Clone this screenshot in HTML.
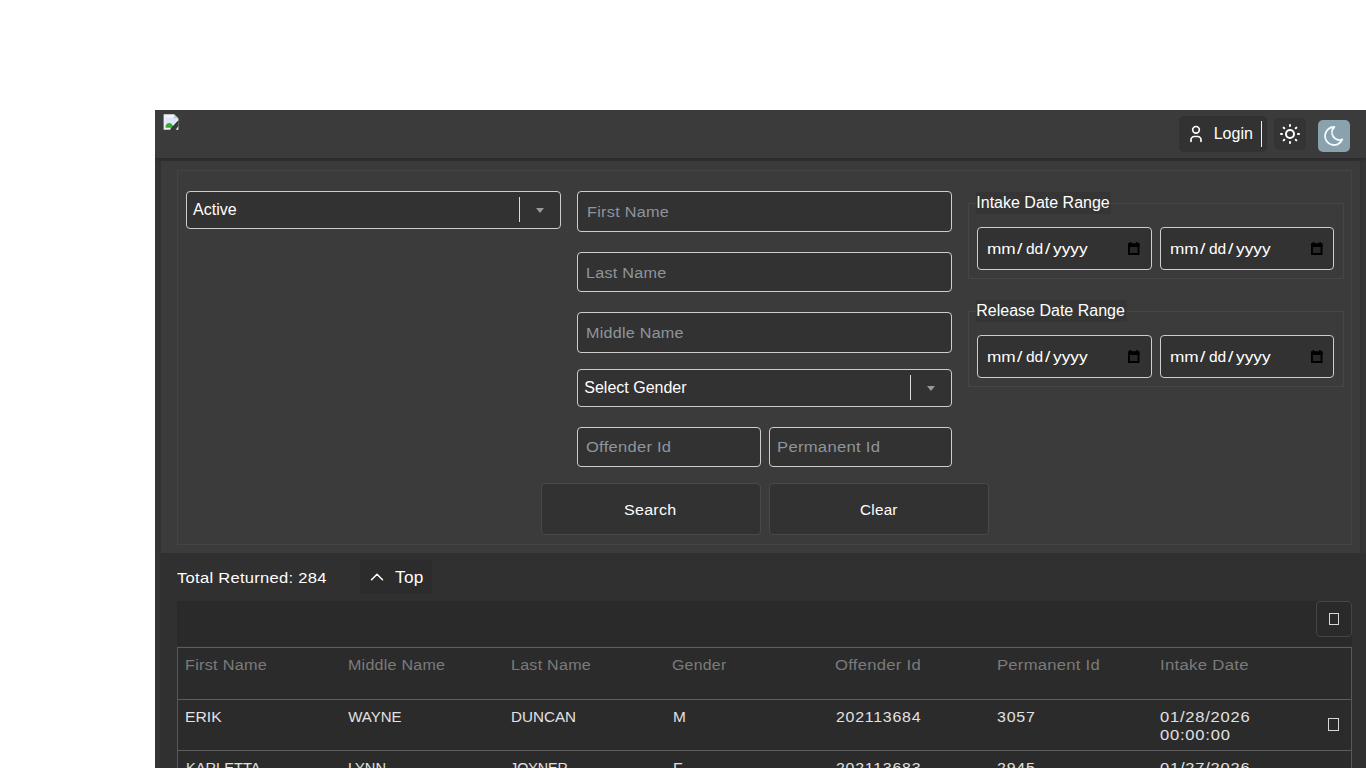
<!DOCTYPE html>
<html>
<head>
<meta charset="utf-8">
<title>Offender Search</title>
<style>
*{box-sizing:border-box;margin:0;padding:0}
html,body{width:1366px;height:768px;overflow:hidden;background:#fff;font-family:"Liberation Sans",sans-serif;}
.abs{position:absolute}
#panel{position:absolute;left:155px;top:110px;width:1211px;height:658px;background:#353535;overflow:hidden}
#pg{position:absolute;left:-155px;top:-110px;width:1366px;height:768px}
#header{position:absolute;left:155px;top:110px;width:1211px;height:48px;background:#3b3b3b;box-shadow:0 1px 3px rgba(0,0,0,.28)}
#card{position:absolute;left:161px;top:161px;width:1199px;height:392px;background:#3b3b3b;box-shadow:0 0 3px rgba(0,0,0,.18)}
#fs{position:absolute;left:177px;top:170px;width:1175px;height:375px;border:1px solid #444}
#results{position:absolute;left:160px;top:553px;width:1206px;height:215px;background:#303030}
.tx{position:absolute;white-space:nowrap;line-height:20px;transform-origin:0 50%;font-family:"Liberation Sans",sans-serif}
.inp{position:absolute;background:#323232;border:1px solid #cdcdcd;border-radius:4px}
.sel{position:absolute;background:#323232;border:1px solid #cdcdcd;border-radius:4px}
.sel .bar{position:absolute;right:40px;top:5px;width:1px;height:25px;background:#dcdcdc}
.sel .arr{position:absolute;right:16px;top:16px;width:0;height:0;border-left:4px solid transparent;border-right:4px solid transparent;border-top:5px solid #989898}
.fset{position:absolute;border:1px solid #464646;width:376px;height:76px}
.leg{position:absolute;background:#353535;height:22px}
.date{position:absolute;width:175px;height:43px;background:#323232;border:1px solid #cdcdcd;border-radius:4px}
.date svg{position:absolute;left:150px;top:14px}
.btn{position:absolute;height:52px;width:220px;background:#323232;border:1px solid #494949;border-radius:4px}
.hl{position:absolute;height:1px;background:#5e5e5e}
.vl{position:absolute;width:1px;background:#585858}
.tofu{position:absolute;border:1px solid #d6d6d6}
</style>
</head>
<body>
<div id="panel">
  <div id="pg">
    <div id="card"></div>
    <div id="results"></div>
    <div id="header"></div>
    <div id="fs"></div>

    <!-- broken image icon -->
    <svg class="abs" style="left:163px;top:114px" width="16" height="16" viewBox="0 0 16 16">
      <path d="M.8 .3h10.2l4.2 4.2v11.2H.8z" fill="#f3f4fb"/>
      <path d="M.8 .3h10.2l4.2 4.2v11.2H.8z" fill="none" stroke="#b9bcc6" stroke-width=".5"/>
      <path d="M2.6 3.4h10.8v10.4H2.6z" fill="#dfe6fb"/>
      <path d="M11 .3l4.2 4.2H11z" fill="#c4c8d4"/>
      <path d="M2.6 13.8v-2.4c1.3-2 3.4-2.8 5.2-2 1.5.7 2.4 2.2 2.8 4.4z" fill="#3fa535"/>
      <path d="M15.4 7.4L7.6 15.9h7.8z" fill="#3b3b3b"/>
      <path d="M15.3 7.3L7.6 15.7" stroke="#173a25" stroke-width="1.3" fill="none"/>
      <path d="M15.2 12.2l-2.4 3.5h2.4z" fill="#eceef4"/>
    </svg>
    <!-- login group -->
    <div class="abs" style="left:1179px;top:116px;width:88px;height:36px;background:#323232;border-radius:5px"></div>
    <svg class="abs" style="left:1186px;top:124px" width="20" height="20" viewBox="0 0 24 24" fill="none" stroke="#fff" stroke-width="2" stroke-linecap="round" stroke-linejoin="round">
      <path d="M8 7a4 4 0 1 0 8 0a4 4 0 0 0 -8 0"/><path d="M6 21v-2a4 4 0 0 1 4 -4h4a4 4 0 0 1 4 4v2"/>
    </svg>
    <div class="abs" style="left:1261px;top:121px;width:1px;height:26px;background:#f0f0f0"></div>
    <!-- sun -->
    <div class="abs" style="left:1274px;top:118px;width:32px;height:32px;background:#343434;border-radius:5px"></div>
    <svg class="abs" style="left:1278px;top:122px" width="24" height="24" viewBox="0 0 24 24" fill="none" stroke="#fff" stroke-width="2" stroke-linecap="round" stroke-linejoin="round">
      <path d="M12 12m-4 0a4 4 0 1 0 8 0a4 4 0 1 0 -8 0"/><path d="M3 12h1m8 -9v1m8 8h1m-9 8v1m-6.4 -15.4l.7 .7m12.1 -.7l-.7 .7m0 11.4l.7 .7m-12.1 -.7l-.7 .7"/>
    </svg>
    <!-- moon -->
    <div class="abs" style="left:1318px;top:120px;width:32px;height:32px;background:#8aa2ae;border-radius:5px"></div>
    <svg class="abs" style="left:1322px;top:124px" width="24" height="24" viewBox="0 0 24 24" fill="none" stroke="#f2f9ff" stroke-width="1.8" stroke-linecap="round" stroke-linejoin="round">
      <path d="M12 3c.132 0 .263 0 .393 0a7.5 7.5 0 0 0 7.92 12.446a9 9 0 1 1 -8.313 -12.454z"/>
    </svg>

    <!-- form col 1 -->
    <div class="sel" style="left:186px;top:191px;width:375px;height:38px"><span class="bar"></span><span class="arr"></span></div>
    <!-- form col 2 -->
    <div class="inp" style="left:577px;top:191px;width:375px;height:41px"></div>
    <div class="inp" style="left:577px;top:252px;width:375px;height:40px"></div>
    <div class="inp" style="left:577px;top:312px;width:375px;height:41px"></div>
    <div class="sel" style="left:577px;top:369px;width:375px;height:38px"><span class="bar"></span><span class="arr"></span></div>
    <div class="inp" style="left:577px;top:427px;width:184px;height:40px"></div>
    <div class="inp" style="left:769px;top:427px;width:183px;height:40px"></div>
    <!-- form col 3 -->
    <div class="fset" style="left:968px;top:203px"></div>
    <div class="leg" style="left:976px;top:192px;width:135px"></div>
    <div class="date" style="left:977px;top:227px"><svg width="11.5" height="13" viewBox="0 0 12 13" preserveAspectRatio="none"><path d="M1 2.5h10v9.6H1z" fill="#282828" stroke="#000" stroke-width="2"/><path d="M0 1.4h12v3.6H0z" fill="#000"/><path d="M2.6 0v3M9.4 0v3" stroke="#000" stroke-width="1.8"/></svg></div>
    <div class="date" style="left:1160px;top:227px;width:174px"><svg width="11.5" height="13" viewBox="0 0 12 13" preserveAspectRatio="none"><path d="M1 2.5h10v9.6H1z" fill="#282828" stroke="#000" stroke-width="2"/><path d="M0 1.4h12v3.6H0z" fill="#000"/><path d="M2.6 0v3M9.4 0v3" stroke="#000" stroke-width="1.8"/></svg></div>
    <div class="fset" style="left:968px;top:311px"></div>
    <div class="leg" style="left:976px;top:300px;width:151px"></div>
    <div class="date" style="left:977px;top:335px"><svg width="11.5" height="13" viewBox="0 0 12 13" preserveAspectRatio="none"><path d="M1 2.5h10v9.6H1z" fill="#282828" stroke="#000" stroke-width="2"/><path d="M0 1.4h12v3.6H0z" fill="#000"/><path d="M2.6 0v3M9.4 0v3" stroke="#000" stroke-width="1.8"/></svg></div>
    <div class="date" style="left:1160px;top:335px;width:174px"><svg width="11.5" height="13" viewBox="0 0 12 13" preserveAspectRatio="none"><path d="M1 2.5h10v9.6H1z" fill="#282828" stroke="#000" stroke-width="2"/><path d="M0 1.4h12v3.6H0z" fill="#000"/><path d="M2.6 0v3M9.4 0v3" stroke="#000" stroke-width="1.8"/></svg></div>
    <!-- buttons -->
    <div class="btn" style="left:541px;top:483px"></div>
    <div class="btn" style="left:769px;top:483px"></div>

    <!-- results -->
    <div class="abs" style="left:360px;top:560px;width:72px;height:34px;background:#2c2c2c;border-radius:4px"></div>
    <svg class="abs" style="left:365.9px;top:566.3px" width="22" height="22" viewBox="0 0 24 24" fill="none" stroke="#fff" stroke-width="1.65" stroke-linecap="round" stroke-linejoin="round"><path d="M6 15l6 -6l6 6"/></svg>
    <div class="abs" style="left:177px;top:601px;width:1175px;height:45px;background:#2a2a2a"></div>
    <div class="abs" style="left:1316px;top:601px;width:36px;height:36px;border:1px solid #464646;border-radius:4px;background:#2a2a2a"></div>
    <div class="tofu" style="left:1329px;top:613px;width:10px;height:12px"></div>
    <div class="abs" style="left:177px;top:647px;width:1175px;height:121px;background:#2b2b2b"></div>
    <div class="hl" style="left:177px;top:647px;width:1175px"></div>
    <div class="hl" style="left:177px;top:699px;width:1175px"></div>
    <div class="hl" style="left:177px;top:750px;width:1175px"></div>
    <div class="vl" style="left:177px;top:647px;height:121px"></div>
    <div class="vl" style="left:1351px;top:647px;height:121px"></div>
    <div class="tofu" style="left:1328px;top:718px;width:11px;height:13px"></div>

    <div class="tx" style="left:1213.70px;top:123.76px;font-size:16px;color:#ffffff;">Login</div>
    <div class="tx" style="left:193.10px;top:200.16px;font-size:16px;color:#ffffff;">Active</div>
    <div class="tx" style="left:584.30px;top:377.86px;font-size:16px;color:#ffffff;">Select Gender</div>
    <div class="tx" style="left:976.30px;top:192.96px;font-size:16px;color:#ffffff;">Intake Date Range</div>
    <div class="tx" style="left:976.30px;top:300.96px;font-size:16px;color:#ffffff;">Release Date Range</div>
    <div class="tx" style="left:586.55px;top:201.63px;font-size:15.5px;color:#8e959c;letter-spacing:0.25px;transform:scaleX(1.0496);">First Name</div>
    <div class="tx" style="left:586.46px;top:263.03px;font-size:15.5px;color:#8e959c;letter-spacing:0.25px;transform:scaleX(1.0434);">Last Name</div>
    <div class="tx" style="left:586.46px;top:322.93px;font-size:15.5px;color:#8e959c;letter-spacing:0.25px;transform:scaleX(1.0391);">Middle Name</div>
    <div class="tx" style="left:586.40px;top:437.23px;font-size:15.5px;color:#8e959c;letter-spacing:0.25px;transform:scaleX(1.0664);">Offender Id</div>
    <div class="tx" style="left:777.43px;top:437.23px;font-size:15.5px;color:#8e959c;letter-spacing:0.25px;transform:scaleX(1.0745);">Permanent Id</div>
    <div class="tx" style="left:624.30px;top:499.63px;font-size:15.5px;color:#ffffff;letter-spacing:0.25px;transform:scaleX(1.0354);">Search</div>
    <div class="tx" style="left:859.60px;top:499.63px;font-size:15.5px;color:#ffffff;letter-spacing:0.25px;transform:scaleX(0.9847);">Clear</div>
    <div class="tx" style="left:177.40px;top:568.03px;font-size:15.5px;color:#ffffff;letter-spacing:0.25px;transform:scaleX(1.0687);">Total Returned: 284</div>
    <div class="tx" style="left:395.10px;top:567.48px;font-size:16.5px;color:#ffffff;letter-spacing:0.3px;transform:scaleX(1.0434);">Top</div>
    <div class="tx" style="left:185.45px;top:655.03px;font-size:15.5px;color:#7b7b7b;letter-spacing:0.25px;transform:scaleX(1.0483);">First Name</div>
    <div class="tx" style="left:348.07px;top:655.03px;font-size:15.5px;color:#7b7b7b;letter-spacing:0.25px;transform:scaleX(1.0337);">Middle Name</div>
    <div class="tx" style="left:510.56px;top:655.03px;font-size:15.5px;color:#7b7b7b;letter-spacing:0.25px;transform:scaleX(1.0355);">Last Name</div>
    <div class="tx" style="left:672.30px;top:655.03px;font-size:15.5px;color:#7b7b7b;letter-spacing:0.25px;transform:scaleX(1.0230);">Gender</div>
    <div class="tx" style="left:835.40px;top:655.03px;font-size:15.5px;color:#7b7b7b;letter-spacing:0.25px;transform:scaleX(1.0740);">Offender Id</div>
    <div class="tx" style="left:997.33px;top:655.03px;font-size:15.5px;color:#7b7b7b;letter-spacing:0.25px;transform:scaleX(1.0724);">Permanent Id</div>
    <div class="tx" style="left:1160.12px;top:655.03px;font-size:15.5px;color:#7b7b7b;letter-spacing:0.25px;transform:scaleX(1.0830);">Intake Date</div>
    <div class="tx" style="left:185.45px;top:706.80px;font-size:15px;color:#e2e2e2;transform:scaleX(1.0469);">ERIK</div>
    <div class="tx" style="left:348.20px;top:706.80px;font-size:15px;color:#e2e2e2;">WAYNE</div>
    <div class="tx" style="left:510.59px;top:706.80px;font-size:15px;color:#e2e2e2;transform:scaleX(1.0139);">DUNCAN</div>
    <div class="tx" style="left:672.77px;top:706.80px;font-size:15px;color:#e2e2e2;transform:scaleX(1.0273);">M</div>
    <div class="tx" style="left:835.80px;top:706.80px;font-size:15px;color:#e2e2e2;letter-spacing:0.7px;transform:scaleX(1.0628);">202113684</div>
    <div class="tx" style="left:996.80px;top:706.80px;font-size:15px;color:#e2e2e2;letter-spacing:0.7px;transform:scaleX(1.0647);">3057</div>
    <div class="tx" style="left:1160.20px;top:706.80px;font-size:15px;color:#e2e2e2;letter-spacing:0.7px;transform:scaleX(1.1008);">01/28/2026</div>
    <div class="tx" style="left:1160.40px;top:725.00px;font-size:15px;color:#e2e2e2;letter-spacing:0.7px;transform:scaleX(1.1041);">00:00:00</div>
    <div class="tx" style="left:185.52px;top:757.80px;font-size:15px;color:#e2e2e2;transform:scaleX(0.9761);">KARLETTA</div>
    <div class="tx" style="left:348.22px;top:757.80px;font-size:15px;color:#e2e2e2;transform:scaleX(0.9766);">LYNN</div>
    <div class="tx" style="left:509.60px;top:757.80px;font-size:15px;color:#e2e2e2;transform:scaleX(0.9523);">JOYNER</div>
    <div class="tx" style="left:672.75px;top:757.80px;font-size:15px;color:#e2e2e2;transform:scaleX(1.0500);">F</div>
    <div class="tx" style="left:835.80px;top:757.80px;font-size:15px;color:#e2e2e2;letter-spacing:0.7px;transform:scaleX(1.0628);">202113683</div>
    <div class="tx" style="left:996.80px;top:757.80px;font-size:15px;color:#e2e2e2;letter-spacing:0.7px;transform:scaleX(1.0647);">2945</div>
    <div class="tx" style="left:1160.20px;top:757.80px;font-size:15px;color:#e2e2e2;letter-spacing:0.7px;transform:scaleX(1.1008);">01/27/2026</div>
    <div class="tx" style="left:987.49px;top:239.03px;font-size:15.5px;color:#ffffff;transform:scaleX(1.1124);">mm</div>
    <div class="tx" style="left:1017.00px;top:239.03px;font-size:15.5px;color:#ffffff;transform:scaleX(1.2400);">/</div>
    <div class="tx" style="left:1026.00px;top:239.03px;font-size:15.5px;color:#ffffff;">dd</div>
    <div class="tx" style="left:1045.00px;top:239.03px;font-size:15.5px;color:#ffffff;transform:scaleX(1.2400);">/</div>
    <div class="tx" style="left:1053.30px;top:239.03px;font-size:15.5px;color:#ffffff;transform:scaleX(1.1136);">yyyy</div>
    <div class="tx" style="left:1170.49px;top:239.03px;font-size:15.5px;color:#ffffff;transform:scaleX(1.1124);">mm</div>
    <div class="tx" style="left:1200.00px;top:239.03px;font-size:15.5px;color:#ffffff;transform:scaleX(1.2400);">/</div>
    <div class="tx" style="left:1209.00px;top:239.03px;font-size:15.5px;color:#ffffff;">dd</div>
    <div class="tx" style="left:1228.00px;top:239.03px;font-size:15.5px;color:#ffffff;transform:scaleX(1.2400);">/</div>
    <div class="tx" style="left:1236.30px;top:239.03px;font-size:15.5px;color:#ffffff;transform:scaleX(1.1136);">yyyy</div>
    <div class="tx" style="left:987.49px;top:347.03px;font-size:15.5px;color:#ffffff;transform:scaleX(1.1124);">mm</div>
    <div class="tx" style="left:1017.00px;top:347.03px;font-size:15.5px;color:#ffffff;transform:scaleX(1.2400);">/</div>
    <div class="tx" style="left:1026.00px;top:347.03px;font-size:15.5px;color:#ffffff;">dd</div>
    <div class="tx" style="left:1045.00px;top:347.03px;font-size:15.5px;color:#ffffff;transform:scaleX(1.2400);">/</div>
    <div class="tx" style="left:1053.30px;top:347.03px;font-size:15.5px;color:#ffffff;transform:scaleX(1.1136);">yyyy</div>
    <div class="tx" style="left:1170.49px;top:347.03px;font-size:15.5px;color:#ffffff;transform:scaleX(1.1124);">mm</div>
    <div class="tx" style="left:1200.00px;top:347.03px;font-size:15.5px;color:#ffffff;transform:scaleX(1.2400);">/</div>
    <div class="tx" style="left:1209.00px;top:347.03px;font-size:15.5px;color:#ffffff;">dd</div>
    <div class="tx" style="left:1228.00px;top:347.03px;font-size:15.5px;color:#ffffff;transform:scaleX(1.2400);">/</div>
    <div class="tx" style="left:1236.30px;top:347.03px;font-size:15.5px;color:#ffffff;transform:scaleX(1.1136);">yyyy</div>

  </div>
</div>
</body>
</html>
